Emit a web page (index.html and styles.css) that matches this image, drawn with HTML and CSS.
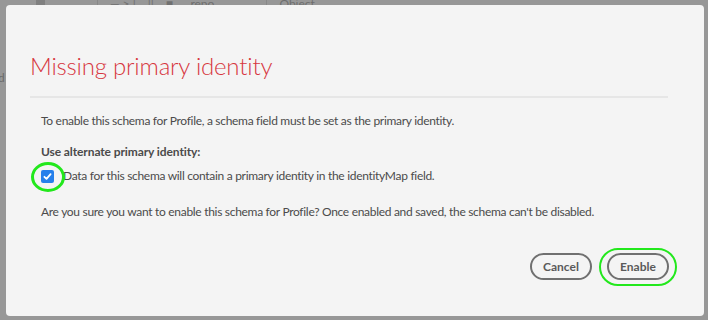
FILE: index.html
```html
<!DOCTYPE HTML>
<html>
	<head>
		<title>Missing primary identity</title>
		<meta name="viewport" content="width=device-width, initial-scale=1.0">
		<link rel="stylesheet" href="styles.css">
	</head>
	<body>
		<!-- page behind the modal, dimmed -->
		<div class="page">
			<div class="toolbar">
				<span class="tb-square"></span>
				<span class="tb-line"></span>
				<span class="tb-icon">&#8212; &gt; |</span>
				<span class="tb-icon">||</span>
				<span class="tb-icon">&#9632;</span>
				<span class="tb-text">_repo</span>
				<span class="tb-line"></span>
				<span class="tb-text">Object</span>
			</div>
			<div class="side-text">d</div>
		</div>

		<div class="dialog" role="dialog">
			<h1 class="dialog-title">Missing primary identity</h1>
			<div class="dialog-body">
				<p class="intro">To enable this schema for Profile, a schema field must be set as the primary identity.</p>
				<p class="field-label">Use alternate primary identity:</p>
				<label class="check-row">
					<span class="checkbox">
						<svg width="13" height="13" viewBox="0 0 13 13">
							<rect x="0" y="0" width="13" height="13" rx="2" fill="#2680eb"/>
							<path d="M3.4 6.8 L5.5 8.9 L9.6 4.2" fill="none" stroke="#fff" stroke-width="1.8" stroke-linecap="round" stroke-linejoin="round"/>
						</svg>
					</span>
					Data for this schema will contain a primary identity in the identityMap field.
				</label>
				<p class="confirm">Are you sure you want to enable this schema for Profile? Once enabled and saved, the schema can't be disabled.</p>
			</div>
			<div class="dialog-buttons">
				<button type="button" class="btn">Cancel</button>
				<button type="button" class="btn btn-enable">Enable</button>
			</div>
		</div>
	</body>
</html>
```
FILE: styles.css
```css
body {
	margin:0;
	width:708px;
	height:320px;
	background-color:#979797;
	font-family:Lato, "Liberation Sans", sans-serif;
	overflow:hidden;
	position:relative;
}

/* dimmed page behind the modal */
.page {
	height:320px;
	color:#6a6a6a;
}
.toolbar {
	display:flex;
	align-items:flex-start;
	gap:12px;
	height:10px;
	padding-left:36px;
	font-size:12px;
	line-height:8px;
	overflow:hidden;
}
.tb-square {
	width:9px;
	height:8px;
	background-color:#808080;
}
.tb-line {
	width:1px;
	height:10px;
	background-color:#888;
	margin-left:40px;
}
.tb-icon {
	color:#707070;
}
.tb-text {
	color:#6e6e6e;
}
.side-text {
	margin-top:60px;
	font-size:12px;
	color:#6a6a6a;
	margin-left:-2px;
}

/* modal */
.dialog {
	position:absolute;
	left:6px;
	top:5px;
	width:698px;
	height:311px;
	box-sizing:border-box;
	background-color:#f4f4f4;
	border-radius:4px;
	display:flex;
	flex-direction:column;
}
.dialog-title {
	margin:46px 36px 0 24px;
	padding-bottom:15px;
	border-bottom:2px solid #e6e6e6;
	font-size:24px;
	line-height:30px;
	font-weight:300;
	color:#d7373f;
	letter-spacing:-0.2px;
}
.dialog-body {
	padding:0 35px;
	font-size:12px;
	line-height:16px;
	color:#4b4b4b;
	letter-spacing:-0.3px;
}
.dialog-body p {
	margin:0;
}
.intro {
	margin-top:15px !important;
}
.field-label {
	margin-top:15px !important;
	font-weight:700;
	letter-spacing:-0.1px;
}
.check-row {
	display:flex;
	align-items:center;
	gap:9px;
	margin-top:8px;
}
.checkbox {
	position:relative;
	display:flex;
	width:13px;
	height:13px;
}
.checkbox::after {
	content:"";
	position:absolute;
	left:-10px;
	top:-8px;
	width:28px;
	height:24px;
	border:3px solid #22e81c;
	border-radius:50%;
}
.confirm {
	margin-top:20px !important;
}

.dialog-buttons {
	display:flex;
	justify-content:flex-end;
	gap:15px;
	margin-top:33px;
	padding-right:35px;
}
.btn {
	position:relative;
	width:62px;
	height:27px;
	border:2px solid #707070;
	border-radius:14px;
	background-color:transparent;
	color:#5a5a5a;
	font-family:Lato, "Liberation Sans", sans-serif;
	font-size:12px;
	font-weight:700;
	text-align:center;
	padding:0;
}
.btn-enable::after {
	content:"";
	position:absolute;
	left:-10px;
	top:-7px;
	right:-10px;
	bottom:-8px;
	border:2px solid #22e81c;
	border-radius:20px;
}
```
